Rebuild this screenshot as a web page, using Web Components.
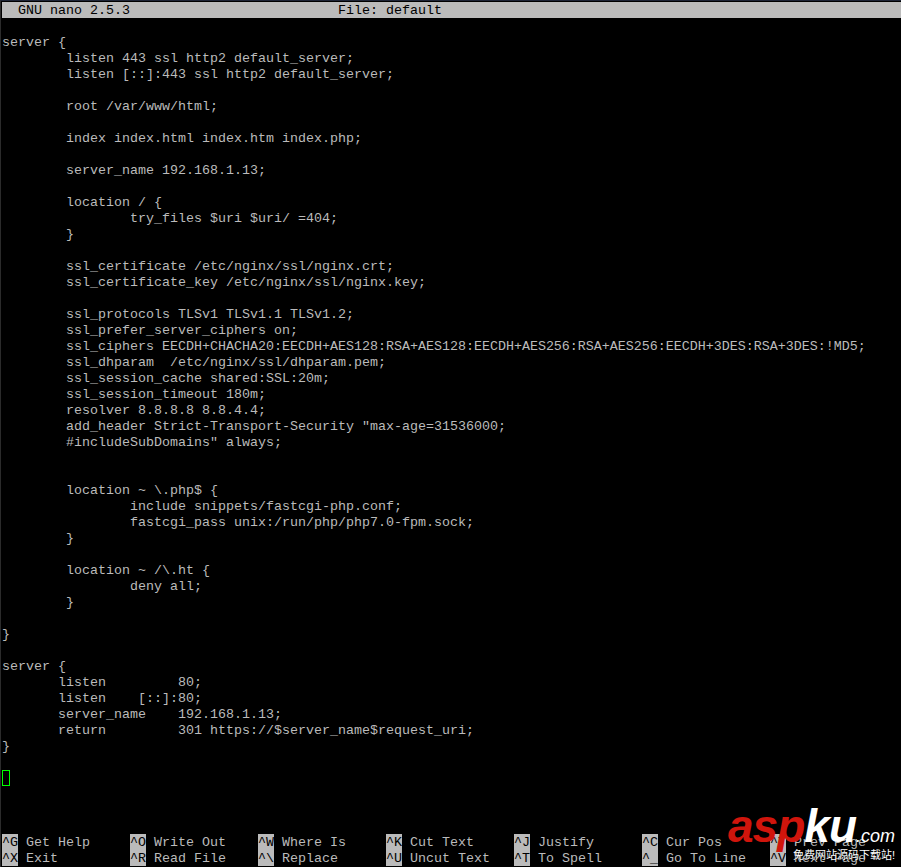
<!DOCTYPE html>
<html>
<head>
<meta charset="utf-8">
<title>GNU nano</title>
<style>
    html, body { margin: 0; padding: 0; background: #000; }
</style>
</head>
<body>
<nano-window>
    <nano-title slot="title" version="GNU nano 2.5.3" file="File: default"></nano-title>
    <nano-buffer id="buffer"></nano-buffer>
    <nano-shortcuts id="shortcuts"></nano-shortcuts>
    <aspku-mark></aspku-mark>
</nano-window>

<script>
const FILE_TEXT = `
server {
        listen 443 ssl http2 default_server;
        listen [::]:443 ssl http2 default_server;

        root /var/www/html;

        index index.html index.htm index.php;

        server_name 192.168.1.13;

        location / {
                try_files $uri $uri/ =404;
        }

        ssl_certificate /etc/nginx/ssl/nginx.crt;
        ssl_certificate_key /etc/nginx/ssl/nginx.key;

        ssl_protocols TLSv1 TLSv1.1 TLSv1.2;
        ssl_prefer_server_ciphers on;
        ssl_ciphers EECDH+CHACHA20:EECDH+AES128:RSA+AES128:EECDH+AES256:RSA+AES256:EECDH+3DES:RSA+3DES:!MD5;
        ssl_dhparam  /etc/nginx/ssl/dhparam.pem;
        ssl_session_cache shared:SSL:20m;
        ssl_session_timeout 180m;
        resolver 8.8.8.8 8.8.4.4;
        add_header Strict-Transport-Security "max-age=31536000;
        #includeSubDomains" always;


        location ~ \\.php$ {
                include snippets/fastcgi-php.conf;
                fastcgi_pass unix:/run/php/php7.0-fpm.sock;
        }

        location ~ /\\.ht {
                deny all;
        }

}

server {
       listen         80;
       listen    [::]:80;
       server_name    192.168.1.13;
       return         301 https://$server_name$request_uri;
}
`;

const SHORTCUTS = [
    ['^G', 'Get Help'], ['^O', 'Write Out'], ['^W', 'Where Is'], ['^K', 'Cut Text'],
    ['^J', 'Justify'], ['^C', 'Cur Pos'], ['^Y', 'Prev Page'],
    ['^X', 'Exit'], ['^R', 'Read File'], ['^\\', 'Replace'], ['^U', 'Uncut Text'],
    ['^T', 'To Spell'], ['^_', 'Go To Line'], ['^V', 'Next Page'],
];

class NanoWindow extends HTMLElement {
    constructor() {
        super();
        this.attachShadow({ mode: 'open' });
    }

    connectedCallback() {
        this.shadowRoot.innerHTML = `
            <style>
                :host {
                    display: flex;
                    flex-direction: column;
                    position: relative;
                    box-sizing: border-box;
                    width: 901px;
                    height: 867px;
                    padding: 1px 0 1px 1px;
                    overflow: hidden;
                    border-top: 1px solid #1d2436;
                    border-left: 1px solid #2b2b2b;
                    background: #000;
                    color: #bbb;
                    font: 13.33px/16px "Liberation Mono", "DejaVu Sans Mono", monospace;
                }
            </style>
            <slot name="title"></slot>
            <slot></slot>
        `;
    }
}

class NanoTitle extends HTMLElement {
    constructor() {
        super();
        this.attachShadow({ mode: 'open' });
    }

    connectedCallback() {
        this.shadowRoot.innerHTML = `
            <style>
                :host {
                    display: grid;
                    grid-template-columns: 320px 1fr;
                    height: 16px;
                    padding-left: 16px;
                    background: #bbb;
                    color: #000;
                    line-height: 18px;
                    white-space: pre;
                }
            </style>
            <span>${this.getAttribute('version')}</span>
            <span>${this.getAttribute('file')}</span>
        `;
    }
}

class NanoBuffer extends HTMLElement {
    constructor() {
        super();
        this.attachShadow({ mode: 'open' });
    }

    connectedCallback() {
        this.shadowRoot.innerHTML = `
            <style>
                :host {
                    display: block;
                    flex: 1;
                }
                pre {
                    margin: 0 0 -1px;
                    padding-top: 1px;
                    font: inherit;
                }
                .cursor {
                    box-sizing: border-box;
                    width: 8px;
                    height: 16px;
                    border: 1px solid #0f0;
                }
            </style>
            <pre></pre>
            <div class="cursor"></div>
        `;
        this.shadowRoot.querySelector('pre').textContent = FILE_TEXT + '\n';
    }
}

class NanoShortcuts extends HTMLElement {
    constructor() {
        super();
        this.attachShadow({ mode: 'open' });
    }

    connectedCallback() {
        const items = SHORTCUTS.map(([key, label]) => `<div class="item"><b>${key}</b><span>${label}</span></div>`);
        this.shadowRoot.innerHTML = `
            <style>
                :host {
                    display: grid;
                    grid-template-columns: repeat(7, 128px);
                    grid-auto-rows: 16px;
                    line-height: 18px;
                }
                .item {
                    display: flex;
                    gap: 8px;
                    white-space: pre;
                }
                b {
                    width: 16px;
                    height: 16px;
                    font-weight: normal;
                    background: #bbb;
                    color: #000;
                }
            </style>
            ${items.join('')}
        `;
    }
}

// watermark pasted over the bottom right corner of the screenshot
class AspkuMark extends HTMLElement {
    constructor() {
        super();
        this.attachShadow({ mode: 'open' });
    }

    connectedCallback() {
        this.shadowRoot.innerHTML = `
            <style>
                :host {
                    position: absolute;
                    right: 6px;
                    bottom: 6px;
                    display: flex;
                    flex-direction: column;
                    align-items: flex-end;
                    font-family: "Liberation Sans", "Noto Sans CJK SC", sans-serif;
                    color: #fff;
                }
                .logo {
                    display: flex;
                    align-items: baseline;
                    height: 42px;
                    font-style: italic;
                    line-height: 42px;
                    letter-spacing: -1px;
                }
                .asp, .ku {
                    font-size: 46px;
                    font-weight: bold;
                }
                .asp { color: #d0150c; }
                .com {
                    font-size: 18px;
                    letter-spacing: 0;
                }
                .slogan {
                    font-size: 11px;
                    line-height: 12px;
                    margin-top: 2px;
                    text-shadow: 0 0 1px #000;
                }
            </style>
            <div class="logo"><span class="asp">asp</span><span class="ku">ku</span><span class="com">.com</span></div>
            <div class="slogan">免费网站源码下载站!</div>
        `;
    }
}

customElements.define('nano-window', NanoWindow);
customElements.define('nano-title', NanoTitle);
customElements.define('nano-buffer', NanoBuffer);
customElements.define('nano-shortcuts', NanoShortcuts);
customElements.define('aspku-mark', AspkuMark);
</script>
</body>
</html>
